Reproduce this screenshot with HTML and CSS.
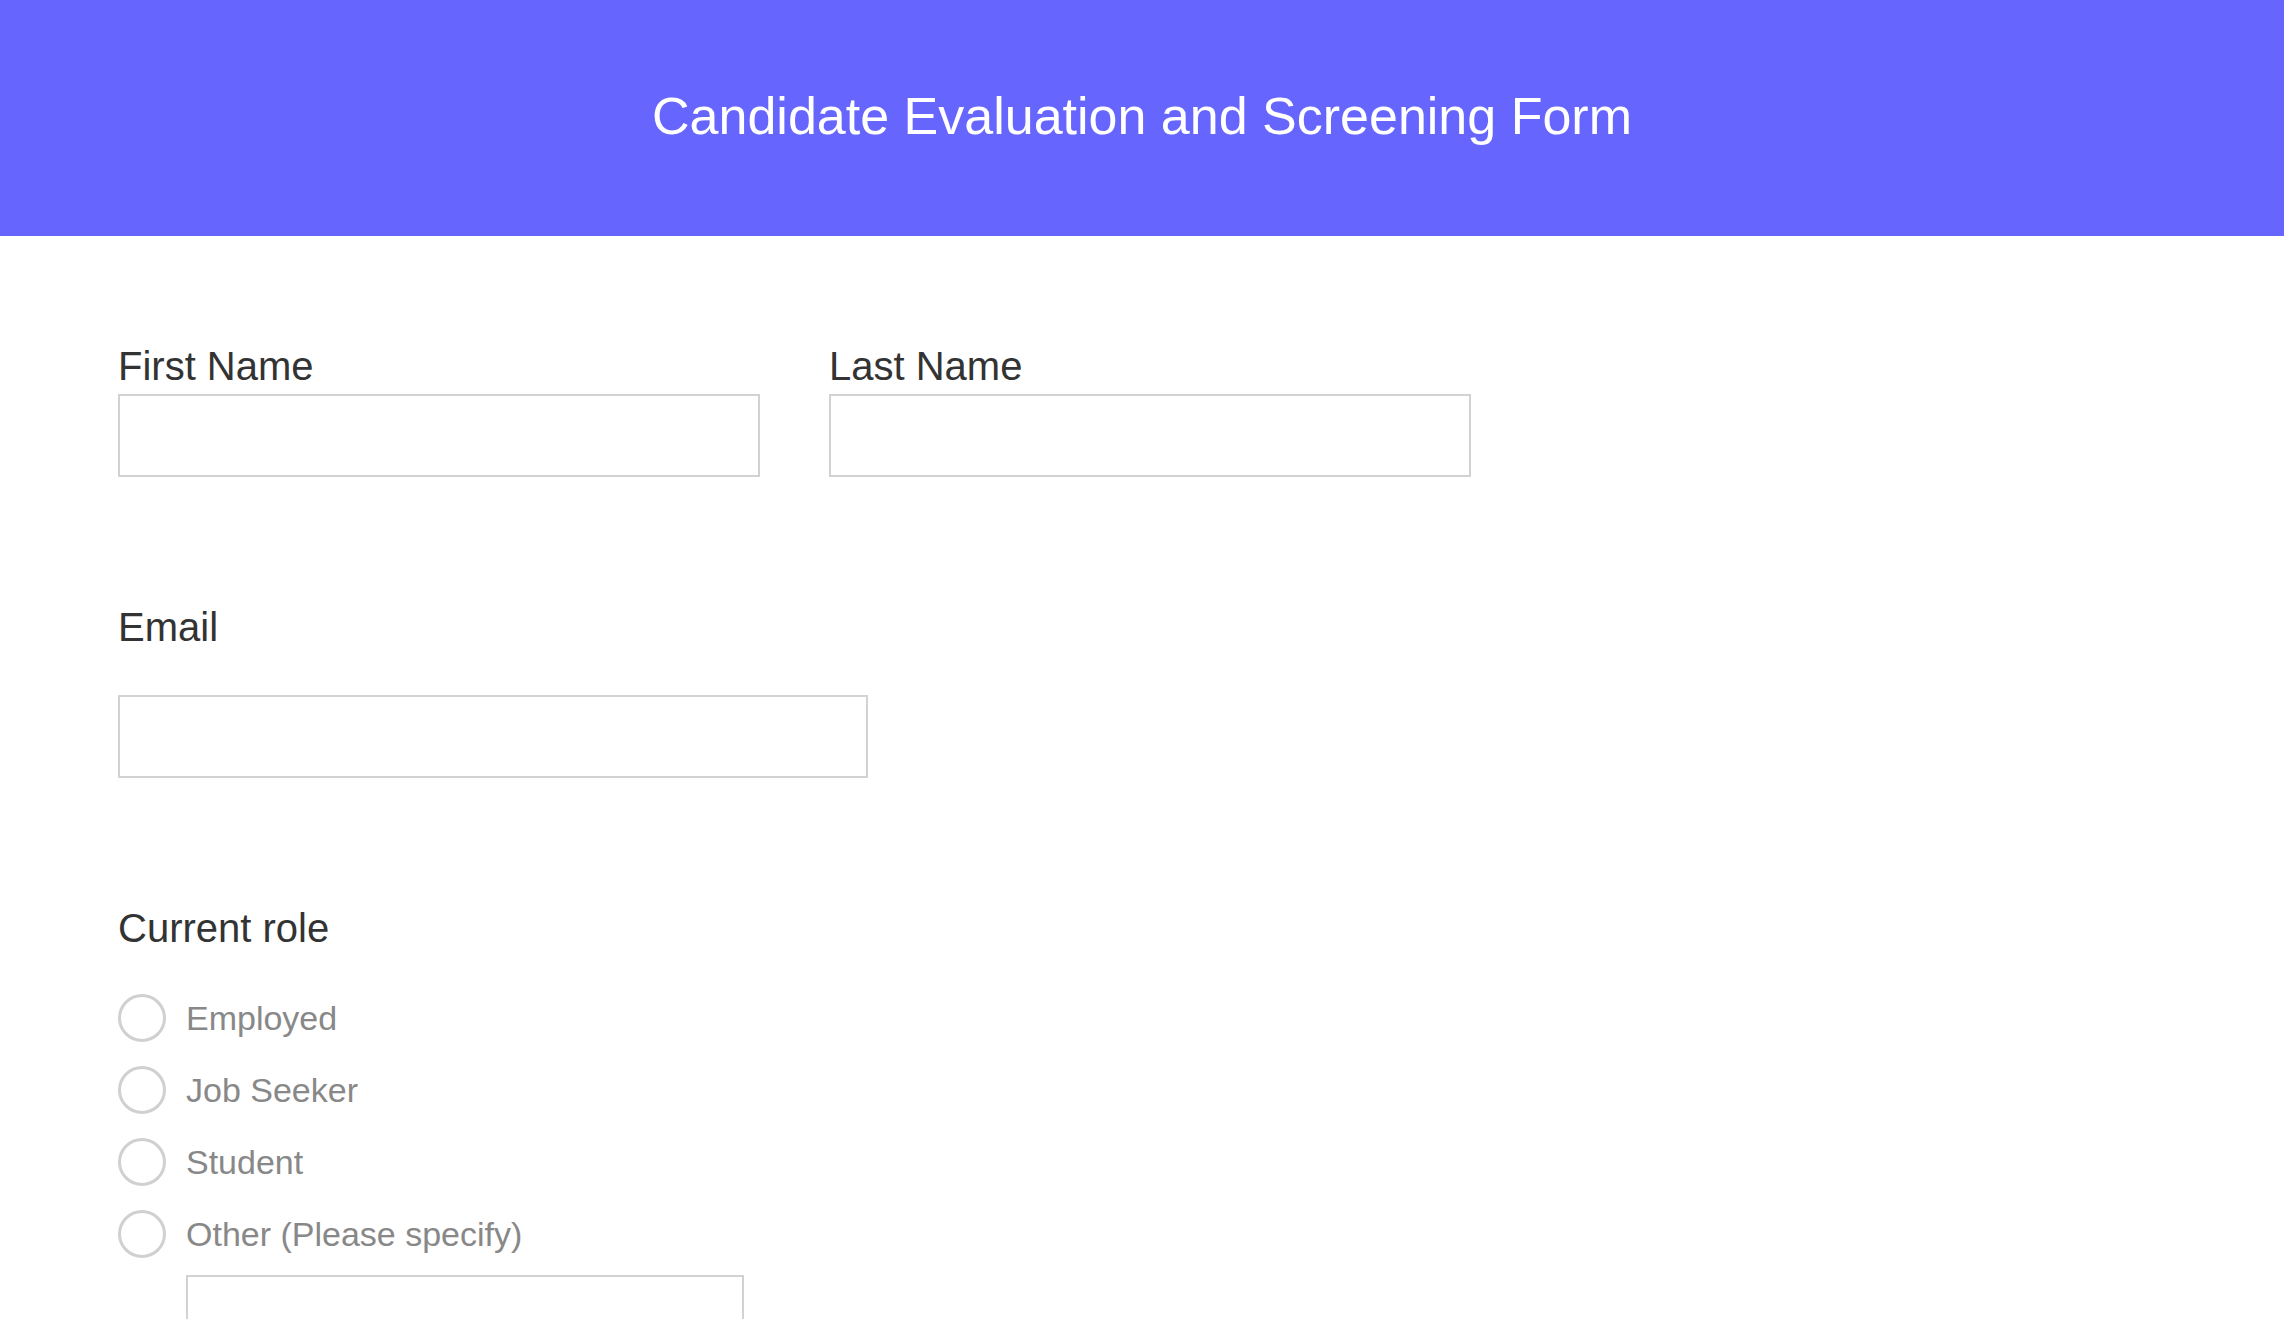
FILE: index.html
```html
<!DOCTYPE html>
<html lang="en">
<head>
    <meta charset="UTF-8">
    <meta name="viewport" content="width=device-width, initial-scale=1.0">
    <title>Candidate Evaluation and Screening Form</title>
    <link rel="stylesheet" href="styles.css">
</head>
<body>
    <header class="form-header">
        <h1>Candidate Evaluation and Screening Form</h1>
    </header>

    <form class="form-body">
        <div class="name-row">
            <div class="field">
                <label for="first-name">First Name</label>
                <input type="text" id="first-name" class="text-input">
            </div>
            <div class="field">
                <label for="last-name">Last Name</label>
                <input type="text" id="last-name" class="text-input">
            </div>
        </div>

        <div class="field field-spaced">
            <label for="email">Email</label>
            <input type="email" id="email" class="text-input email-input">
        </div>

        <div class="field field-spaced">
            <span class="group-label">Current role</span>
            <div class="radio-list">
                <label class="radio-row"><input type="radio" name="role"> Employed</label>
                <label class="radio-row"><input type="radio" name="role"> Job Seeker</label>
                <label class="radio-row"><input type="radio" name="role"> Student</label>
                <label class="radio-row"><input type="radio" name="role"> Other (Please specify)</label>
            </div>
            <input type="text" class="text-input other-input">
        </div>
    </form>
</body>
</html>
```

FILE: styles.css
```css
body {
    margin: 0;
    font-family: 'Liberation Sans', Arial, sans-serif;
    background-color: #ffffff;
    color: #333333;
}

.form-header {
    height: 236px;
    background-color: #6666ff;
    display: flex;
    justify-content: center;
    align-items: center;
}

.form-header h1 {
    margin: 0 0 4px;
    font-size: 52px;
    font-weight: normal;
    color: #ffffff;
}

.form-body {
    padding: 107px 118px 0;
}

.name-row {
    display: flex;
    gap: 69px;
}

.field {
    display: flex;
    flex-direction: column;
    align-items: flex-start;
}

.field label,
.group-label {
    font-size: 40px;
    line-height: 46px;
    color: #333333;
    margin-bottom: 5px;
}

.field-spaced {
    margin-top: 127px;
}

.field-spaced > label {
    margin-bottom: 45px;
}

.field-spaced > .group-label {
    margin-bottom: 43px;
}

.text-input {
    box-sizing: border-box;
    width: 642px;
    height: 83px;
    margin: 0;
    padding: 0 16px;
    border: 2px solid #d2d2d2;
    border-radius: 0;
    font-size: 30px;
    font-family: inherit;
    outline: none;
}

.email-input {
    width: 750px;
}

.radio-list {
    display: flex;
    flex-direction: column;
    gap: 24px;
}

.field .radio-row {
    display: flex;
    align-items: center;
    gap: 20px;
    height: 48px;
    margin: 0;
    font-size: 34px;
    line-height: normal;
    color: #888888;
}

.radio-row input {
    appearance: none;
    -webkit-appearance: none;
    box-sizing: border-box;
    width: 48px;
    height: 48px;
    margin: 0;
    border: 3px solid #d0d0d0;
    border-radius: 50%;
    background: #ffffff;
}

.other-input {
    width: 558px;
    margin: 17px 0 0 68px;
}
```
